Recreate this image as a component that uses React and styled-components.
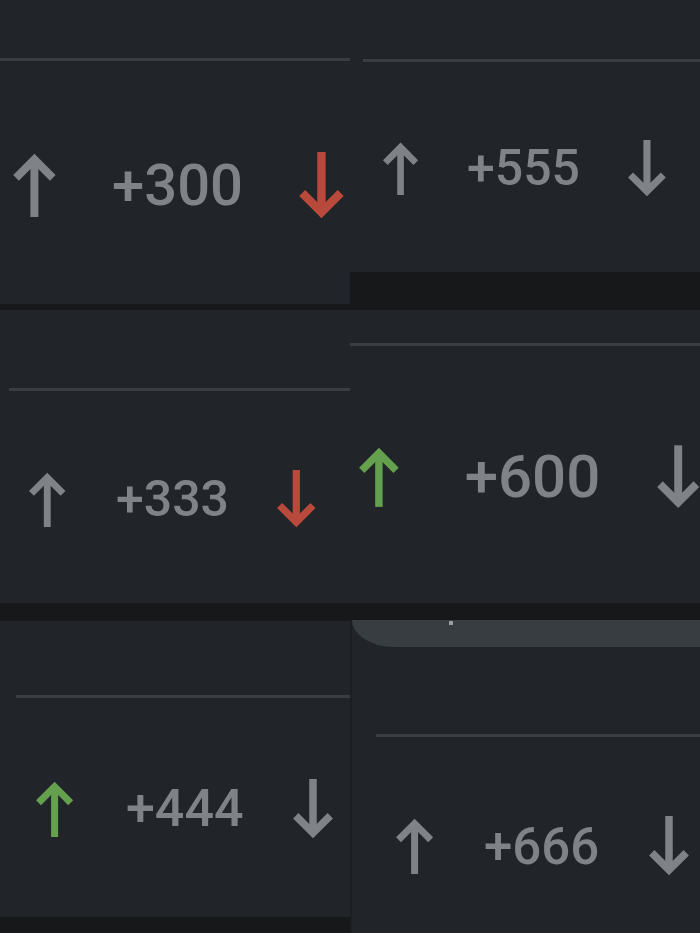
import styled, { createGlobalStyle } from 'styled-components';

const GlobalStyle = createGlobalStyle`
  html, body {
    margin: 0;
    padding: 0;
    background: #171819;
  }
  body {
    font-family: Roboto, "Noto Sans", "Liberation Sans", sans-serif;
  }
`;

const GRAY = '#7f8387';
const RED = '#b9493b';
const GREEN = '#65a04f';

// each crop of the vote bar, left column then right column
const left = [
  { h: 304, line: 58, inset: 0, mid: 185, up: [12, 64, GRAY], count: ['+300', 58, 112], down: [298, 67, RED], band: 6 },
  { h: 293, line: 78, inset: 9, mid: 189, up: [28, 55, GRAY], count: ['+333', 50, 116], down: [276, 58, RED], band: 18 },
  { h: 296, line: 74, inset: 16, mid: 188, up: [35, 56, GREEN], count: ['+444', 52, 126], down: [292, 60, GRAY], band: 16 },
];

const right = [
  { h: 272, line: 59, inset: 13, mid: 168, up: [32, 53, GRAY], count: ['+555', 50, 117], down: [277, 57, GRAY], band: 38 },
  { h: 293, line: 33, inset: 0, mid: 167, up: [8, 66, GREEN], count: ['+600', 60, 119], down: [310, 70, GRAY], band: 17 },
  { h: 313, line: 87, inset: 24, mid: 226, up: [43, 56, GRAY], count: ['+666', 51, 132], down: [296, 60, GRAY], band: 0, sheet: true },
];

function Arrow({ size, color, down }) {
  return (
    <svg width={size * 0.7} height={size} viewBox="0 0 28 40" fill="none">
      <g transform={down ? 'rotate(180 14 20)' : undefined} stroke={color} strokeWidth="5" strokeLinejoin="miter" strokeLinecap="butt">
        <path d="M14 40V4" />
        <path d="M2.5 15.5L14 4l11.5 11.5" />
      </g>
    </svg>
  );
}

function VoteTile({ t }) {
  const [upX, upH, upC] = t.up;
  const [label, fs, cx] = t.count;
  const [dX, dH, dC] = t.down;
  const upW = upH * 0.7;
  const top = t.sheet ? 27 : 0;
  return (
    <>
      <Tile $h={t.h} $edge={t.sheet}>
        {t.sheet && (
          <Sheet>
            <Dot />
          </Sheet>
        )}
        <Divider $top={t.line} $inset={t.inset} />
        <Row $top={t.mid - 40 - (t.line + 3) - top} $pad={upX}>
          <Arrow size={upH} color={upC} />
          <Count $size={fs} $gap={cx - upX - upW} $w={dX - cx}>{label}</Count>
          <Arrow size={dH} color={dC} down />
        </Row>
      </Tile>
      {t.band > 0 && <Band $h={t.band} />}
    </>
  );
}

export default function App() {
  return (
    <>
      <GlobalStyle />
      <Page>
        <Column>
          {left.map((t) => <VoteTile key={t.count[0]} t={t} />)}
        </Column>
        <Column>
          {right.map((t) => <VoteTile key={t.count[0]} t={t} />)}
        </Column>
      </Page>
    </>
  );
}

const Page = styled.div`
  display: grid;
  grid-template-columns: 350px 350px;
  width: 700px;
  height: 933px;
  overflow: hidden;
`;

const Column = styled.div`
  display: flex;
  flex-direction: column;
  overflow: hidden;
`;

const Tile = styled.div`
  display: flex;
  flex-direction: column;
  flex: none;
  height: ${(p) => p.$h}px;
  background: #212529;
  overflow: hidden;
  box-sizing: border-box;
  border-left: ${(p) => (p.$edge ? '2px solid #1c1f22' : 'none')};
`;

const Sheet = styled.div`
  flex: none;
  height: 27px;
  padding-left: 97px;
  background: #383d41;
  border-bottom-left-radius: 42px 27px;
`;

const Dot = styled.div`
  width: 4px;
  height: 4px;
  margin-top: 1px;
  background: #9a9fa2;
`;

const Divider = styled.div`
  flex: none;
  height: 3px;
  margin-top: ${(p) => p.$top}px;
  margin-left: ${(p) => p.$inset}px;
  background: #3a3e43;
`;

const Row = styled.div`
  display: flex;
  align-items: center;
  flex: none;
  height: 80px;
  margin-top: ${(p) => p.$top}px;
  padding-left: ${(p) => p.$pad}px;
  white-space: nowrap;
`;

const Count = styled.span`
  flex: none;
  width: ${(p) => p.$w}px;
  margin-left: ${(p) => p.$gap}px;
  font-size: ${(p) => p.$size}px;
  font-weight: 500;
  line-height: 1;
  color: ${GRAY};
`;

const Band = styled.div`
  flex: none;
  height: ${(p) => p.$h}px;
  background: #171819;
`;
